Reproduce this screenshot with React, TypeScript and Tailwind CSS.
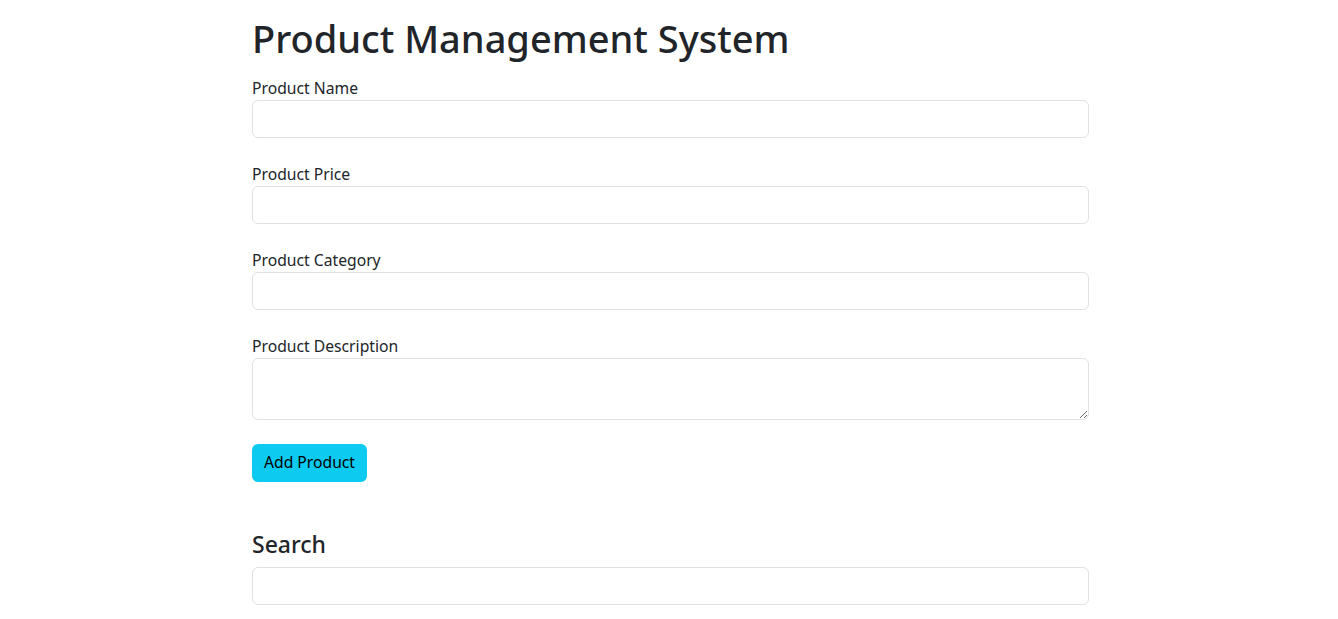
import React, { useState } from 'react';

const fields = ['Product Name', 'Product Price', 'Product Category'];

const App: React.FC = () => {
  const [values, setValues] = useState<Record<string, string>>({});
  const [search, setSearch] = useState('');

  const inputCls =
    'block w-full h-[38px] px-3 bg-white border border-[#dee2e6] rounded-[6px] text-base text-[#212529] outline-none';

  return (
    <div
      className="min-h-screen bg-white text-[#212529] flex justify-center pl-[3px]"
      style={{ fontFamily: '"Noto Sans", "Open Sans", sans-serif' }}
    >
      <div className="w-[837px] pt-[14px]">
        <h1 className="text-[38px] leading-[48px] font-medium mb-[14px]">Product Management System</h1>

        {fields.map(f => (
          <div key={f} className="mb-6">
            <label className="block text-[15.7px] leading-6">{f}</label>
            <input
              type="text"
              value={values[f] || ''}
              onChange={e => setValues({ ...values, [f]: e.target.value })}
              className={inputCls}
            />
          </div>
        ))}

        <div className="mb-6">
          <label className="block text-[15.7px] leading-6">Product Description</label>
          <textarea
            rows={2}
            className="block w-full h-[62px] px-3 py-1.5 bg-white border border-[#dee2e6] rounded-[6px] text-base outline-none"
          />
        </div>

        <button className="h-[38px] w-[115px] bg-[#0dcaf0] text-black text-[15.7px] rounded-[6px]">Add Product</button>

        {/* Search */}
        <h4 className="mt-12 text-[23px] leading-[29px] font-medium mb-2">Search</h4>
        <input
          type="text"
          value={search}
          onChange={e => setSearch(e.target.value)}
          className={inputCls}
        />
      </div>
    </div>
  );
};

export default App;
